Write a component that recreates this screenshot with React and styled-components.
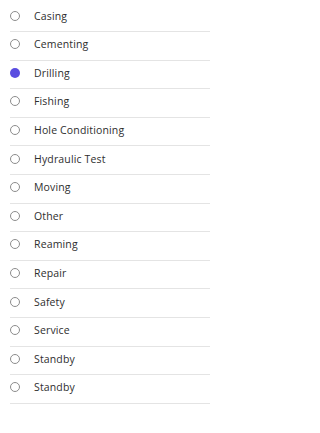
import React, { useState } from 'react'
import styled, { createGlobalStyle } from 'styled-components'

const GlobalStyle = createGlobalStyle`
    body {
        margin: 0;
        background: #ffffff;
        font-family: "Open Sans", "Liberation Sans", sans-serif;
    }
`;

const List = styled.div`
    display: flex;
    flex-direction: column;
    width: 200px;
    margin-left: 10px;
    padding-top: 3.4px;
`;

const Row = styled.label`
    display: flex;
    align-items: center;
    gap: 14px;
    height: 28.6px;
    box-sizing: border-box;
    padding-bottom: 3px;
    border-bottom: 1px solid #e4e4e4;
    cursor: pointer;
`;

const Radio = styled.span`
    width: 10px;
    height: 10px;
    box-sizing: border-box;
    border-radius: 50%;
    border: ${props => props.checked ? 'none' : '1.3px solid #8c8c8c'};
    background-color: ${props => props.checked ? '#5a4de0' : '#ffffff'};
    flex-shrink: 0;
`;

const Label = styled.span`
    font-size: 10.5px;
    font-weight: 500;
    color: #2e2e2e;
    letter-spacing: 0.15px;
`;

const options = [
    'Casing',
    'Cementing',
    'Drilling',
    'Fishing',
    'Hole Conditioning',
    'Hydraulic Test',
    'Moving',
    'Other',
    'Reaming',
    'Repair',
    'Safety',
    'Service',
    'Standby',
    'Standby',
]

const App = () => {
    const [selected, setSelected] = useState(2)

    return (
        <>
            <GlobalStyle />
            <List>
                {options.map((name, i) => (
                    <Row key={i} onClick={() => setSelected(i)}>
                        <Radio checked={selected === i} />
                        <Label>{name}</Label>
                    </Row>
                ))}
            </List>
        </>
    )
}

export default App
